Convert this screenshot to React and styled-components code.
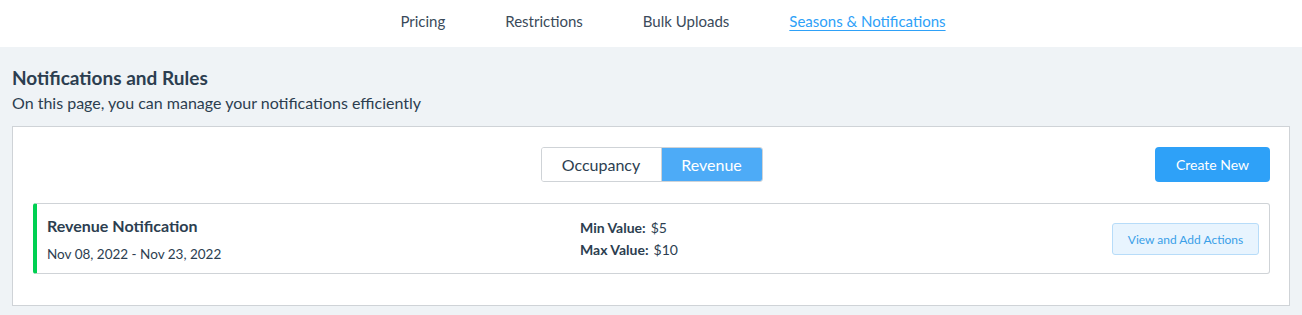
import styled, { createGlobalStyle } from "styled-components"
import { useState } from "react"

const GlobalStyle = createGlobalStyle`
    * { box-sizing: border-box; }
    body {
        margin: 0;
        background: #eff3f6;
        font-family: Lato, "Open Sans", sans-serif;
        color: #2c3e50;
    }
`

const TopNav = styled.nav`
    height: 47px;
    background: #fff;
    display: flex;
    justify-content: center;
    align-items: center;
    gap: 60px;
    padding-left: 44px;
    padding-bottom: 5px;
`

const NavLink = styled.a`
    font-size: 15px;
    color: ${p => (p.$active ? "#2ea1f8" : "#3a4a5a")};
    text-decoration: ${p => (p.$active ? "underline" : "none")};
    text-underline-offset: 3px;
    cursor: pointer;
`

const Page = styled.main`
    padding: 20px 12px 10px;
`

const Title = styled.h2`
    margin: 0;
    font-size: 19px;
    font-weight: 700;
    color: #2c3e50;
    line-height: 22px;
`

const Subtitle = styled.p`
    margin: 4px 0 13px;
    font-size: 16px;
    line-height: 20px;
    color: #2c3e50;
`

const Panel = styled.section`
    background: #fff;
    border: 1px solid #cfd3d7;
    padding: 20px 19px 31px 20px;
`

const Toolbar = styled.div`
    display: grid;
    grid-template-columns: 1fr auto 1fr;
    align-items: center;
    margin-bottom: 21px;
`

const Toggle = styled.div`
    grid-column: 2;
    display: flex;
    border: 1px solid #cfd3d7;
    border-radius: 3px;
    overflow: hidden;
`

const ToggleButton = styled.button`
    height: 33px;
    width: ${p => p.$width}px;
    border: none;
    font-family: inherit;
    font-size: 16px;
    cursor: pointer;
    background: ${p => (p.$active ? "#4dabf7" : "#fff")};
    color: ${p => (p.$active ? "#fff" : "#2c3e50")};
    & + & { border-left: 1px solid #cfd3d7; }
`

const PrimaryButton = styled.button`
    justify-self: end;
    height: 35px;
    width: 115px;
    margin-top: -1px;
    border: none;
    border-radius: 4px;
    background: #2ea1f8;
    color: #fff;
    font-family: inherit;
    font-size: 14px;
`

const Card = styled.div`
    display: grid;
    grid-template-columns: 533px 1fr auto;
    align-items: center;
    height: 71px;
    border: 1px solid #cfd3d7;
    border-left: 4px solid #00d052;
    border-radius: 3px;
    padding: 0 10px;
`

const CardName = styled.div`
    font-size: 16px;
    font-weight: 700;
    line-height: 20px;
    margin-top: 2px;
`

const CardDates = styled.div`
    font-size: 13.5px;
    line-height: 18px;
    margin-top: 9px;
`

const ValueRow = styled.div`
    font-size: 14px;
    line-height: 22px;
    b { font-weight: 700; margin-right: 5px; }
`

const ActionButton = styled.button`
    height: 32px;
    width: 147px;
    margin-top: 1px;
    border: 1px solid #b7dcf9;
    border-radius: 3px;
    background: #e8f4fe;
    color: #3a9fe8;
    font-family: inherit;
    font-size: 12px;
`

export default function App() {
    const [tab, setTab] = useState("revenue")
    const links = ["Pricing", "Restrictions", "Bulk Uploads", "Seasons & Notifications"]

    return (
        <>
            <GlobalStyle />
            <TopNav>
                {links.map(l => (
                    <NavLink key={l} $active={l === "Seasons & Notifications"}>{l}</NavLink>
                ))}
            </TopNav>
            <Page>
                <Title>Notifications and Rules</Title>
                <Subtitle>On this page, you can manage your notifications efficiently</Subtitle>
                <Panel>
                    <Toolbar>
                        <Toggle>
                            <ToggleButton $width={119} $active={tab === "occupancy"} onClick={() => setTab("occupancy")}>Occupancy</ToggleButton>
                            <ToggleButton $width={101} $active={tab === "revenue"} onClick={() => setTab("revenue")}>Revenue</ToggleButton>
                        </Toggle>
                        <PrimaryButton>Create New</PrimaryButton>
                    </Toolbar>
                    <Card>
                        <div>
                            <CardName>Revenue Notification</CardName>
                            <CardDates>Nov 08, 2022 - Nov 23, 2022</CardDates>
                        </div>
                        <div>
                            <ValueRow><b>Min Value:</b>$5</ValueRow>
                            <ValueRow><b>Max Value:</b>$10</ValueRow>
                        </div>
                        <ActionButton>View and Add Actions</ActionButton>
                    </Card>
                </Panel>
            </Page>
        </>
    )
}
